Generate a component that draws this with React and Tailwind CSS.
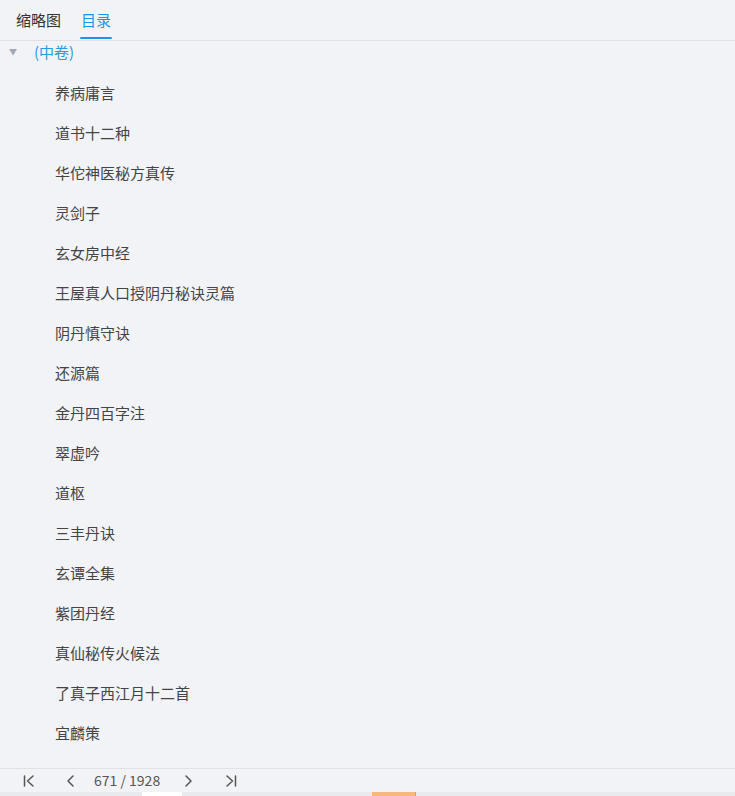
import React from "react";

const items = [
  "养病庸言",
  "道书十二种",
  "华佗神医秘方真传",
  "灵剑子",
  "玄女房中经",
  "王屋真人口授阴丹秘诀灵篇",
  "阴丹慎守诀",
  "还源篇",
  "金丹四百字注",
  "翠虚吟",
  "道枢",
  "三丰丹诀",
  "玄谭全集",
  "紫团丹经",
  "真仙秘传火候法",
  "了真子西江月十二首",
  "宜麟策",
];

const font = { fontFamily: '"Noto Sans CJK SC", "Noto Sans", sans-serif' };

function Icon({ d }) {
  return (
    <svg width="16" height="16" viewBox="0 0 16 16" fill="none" stroke="#555" strokeWidth="1.5" strokeLinecap="round" strokeLinejoin="round">
      <path d={d} />
    </svg>
  );
}

export default function App() {
  return (
    <div className="w-[735px] h-[796px] bg-[#f2f3f7] flex flex-col overflow-hidden text-[#333]" style={font}>
      <div className="h-[41px] shrink-0 flex items-end gap-[20px] px-4 border-b border-[#dfe1e6]">
        <div className="h-[40px] flex items-center text-[15px] text-[#333]">缩略图</div>
        <div className="h-[40px] flex items-center text-[15px] text-[#1c95e6] relative">
          目录
          <div className="absolute left-[-1px] right-[-1px] bottom-[1px] h-[2px] bg-[#1c95e6] rounded" />
        </div>
      </div>
      <div className="flex-1 overflow-hidden">
        <div className="h-[22px] flex items-center">
          <span className="w-[34px] pl-[9px] text-[8px] text-[#a0a6b8] leading-none">▼</span>
          <span className="text-[15px] text-[#2a9ae2]">(中卷)</span>
        </div>
        <div className="flex flex-col pt-[10px]">
          {items.map((t) => (
            <div key={t} className="h-[40px] flex items-center pl-[55px] text-[15px] text-[#444]">
              {t}
            </div>
          ))}
        </div>
      </div>
      <div className="h-[24px] shrink-0 border-t border-[#dfe1e6] flex items-center text-[14px] text-[#555]">
        <div className="ml-[21px] flex items-center">
          <Icon d="M3.5 3v10M12 3L6.5 8l5.5 5" />
        </div>
        <div className="ml-[26px] flex items-center">
          <Icon d="M10 3L5 8l5 5" />
        </div>
        <span className="ml-[15px]">671 / 1928</span>
        <div className="ml-[20px] flex items-center">
          <Icon d="M6 3l5 5-5 5" />
        </div>
        <div className="ml-[27px] flex items-center">
          <Icon d="M4 3l5.5 5L4 13M12.5 3v10" />
        </div>
      </div>
      <div className="h-[4px] shrink-0 bg-[#e9eaee] flex">
        <div className="w-[142px]" />
        <div className="w-[40px] bg-white" />
        <div className="w-[190px]" />
        <div className="w-[44px] bg-[#f8b77c] border-r border-[#e89a55]" />
      </div>
    </div>
  );
}
